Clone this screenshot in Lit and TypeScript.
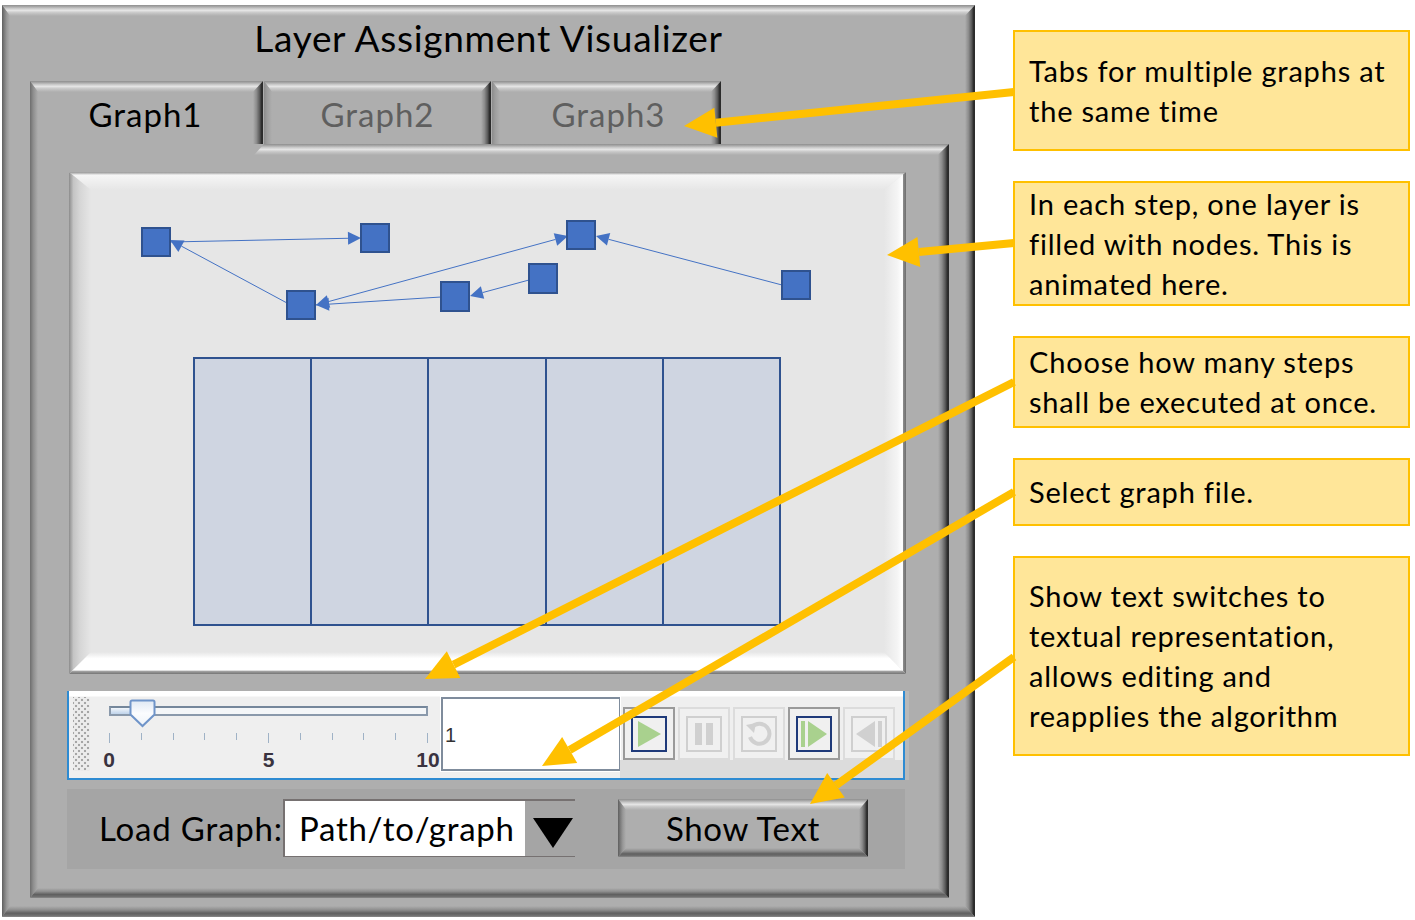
import { LitElement, html, svg, css } from 'lit';
import { customElement } from 'lit/decorators.js';

type Pt = [number, number];

// Coordinates of the drawing on the canvas, in page pixels
const NODES: [number, number, number, number][] = [
  [142, 228, 28, 28],
  [361, 224, 28, 28],
  [287, 291, 28, 28],
  [441, 282, 28, 29],
  [567, 221, 28, 28],
  [529, 264, 28, 29],
  [782, 271, 28, 28],
];

const EDGES: { from: Pt; to: Pt; both?: boolean }[] = [
  { from: [170, 242], to: [361, 238] },
  { from: [287, 303], to: [170, 240] },
  { from: [316, 305], to: [568, 236], both: true },
  { from: [441, 297], to: [316, 305] },
  { from: [529, 280], to: [470, 296] },
  { from: [782, 285], to: [596, 236] },
];

const ANNOTATIONS: { h: number; lines: string[] }[] = [
  { h: 121, lines: ['Tabs for multiple graphs at', 'the same time'] },
  { h: 125, lines: ['In each step, one layer is', 'filled with nodes. This is', 'animated here.'] },
  { h: 92, lines: ['Choose how many steps', 'shall be executed at once.'] },
  { h: 68, lines: ['Select graph file.'] },
  { h: 200, lines: ['Show text switches to', 'textual representation,', 'allows editing and', 'reapplies the algorithm'] },
];

const CALLOUTS: { from: Pt; tip: Pt }[] = [
  { from: [1014, 92], tip: [684, 126] },
  { from: [1014, 243], tip: [887, 255] },
  { from: [1014, 382], tip: [425, 679] },
  { from: [1014, 492], tip: [542, 766] },
  { from: [1014, 657], tip: [810, 804] },
];

// Triangle with its point at tip, pointing away from "from"
function head(from: Pt, tip: Pt, len: number, half: number) {
  const dx = tip[0] - from[0];
  const dy = tip[1] - from[1];
  const d = Math.hypot(dx, dy);
  const ux = dx / d;
  const uy = dy / d;
  const bx = tip[0] - ux * len;
  const by = tip[1] - uy * len;
  const pts = `${tip[0]},${tip[1]} ${bx - uy * half},${by + ux * half} ${bx + uy * half},${by - ux * half}`;
  return { pts, base: [bx, by] as Pt };
}

const edges = () => html`<i class="e t"></i><i class="e l"></i><i class="e r"></i><i class="e b"></i>`;

const TICKS = [0, 1, 2, 3, 4, 5, 6, 7, 8, 9, 10];

@customElement('app-root')
export class AppRoot extends LitElement {
  static styles = css`
    :host {
      display: flex;
      width: 1415px;
      height: 920px;
      position: relative;
      overflow: hidden;
      background: #fff;
      font-family: Lato, 'Open Sans', sans-serif;
      font-variant-ligatures: none;
      color: #000;
    }

    /* bevelled box: four mitred edges laid over the box */
    .bevel {
      position: relative;
      background: #aeaeae;
      box-sizing: border-box;
      --t: 11px;
      --l: 8px;
      --r: 10px;
      --b: 11px;
    }
    .e {
      position: absolute;
      display: block;
    }
    .e.t {
      left: 0;
      right: 0;
      top: 0;
      height: var(--t);
      clip-path: polygon(0 0, 100% 0, calc(100% - var(--r)) 100%, var(--l) 100%);
      background: linear-gradient(180deg, #8e8e8e 0, #a8a8a8 15%, #d0d0d0 35%, #e4e4e4 50%, #c8c8c8 70%, #aeaeae 100%);
    }
    .e.l {
      left: 0;
      top: 0;
      bottom: 0;
      width: var(--l);
      clip-path: polygon(0 0, 100% var(--t), 100% calc(100% - var(--b)), 0 100%);
      background: linear-gradient(90deg, #5e5e5e 0, #787878 25%, #989898 60%, #aeaeae 100%);
    }
    .e.r {
      right: 0;
      top: 0;
      bottom: 0;
      width: var(--r);
      clip-path: polygon(100% 0, 100% 100%, 0 calc(100% - var(--b)), 0 var(--t));
      background: linear-gradient(90deg, #aeaeae 0, #8c8c8c 35%, #5c5c5c 65%, #2e2e2e 85%, #2a2a2a 100%);
    }
    .e.b {
      left: 0;
      right: 0;
      bottom: 0;
      height: var(--b);
      clip-path: polygon(var(--l) 0, calc(100% - var(--r)) 0, 100% 100%, 0 100%);
      background: linear-gradient(180deg, #aeaeae 0, #8e8e8e 35%, #606060 65%, #6e6e6e 85%, #8a8a8a 100%);
    }

    .window {
      margin: 5px 0 0 2px;
      width: 973px;
      height: 912px;
      padding-left: 28px;
      flex: none;
    }
    .title {
      height: 76px;
      width: 917px;
      margin-left: -28px;
      padding-left: 28px;
      box-sizing: content-box;
      font-size: 37px;
      letter-spacing: 0.7px;
      line-height: 66px;
      text-align: center;
    }

    .tabs {
      display: flex;
      gap: 1px;
      height: 63px;
    }
    .tab {
      height: 63px;
      flex: none;
      text-align: center;
      font-size: 33px;
      letter-spacing: 1px;
      line-height: 66px;
      color: #5f5f5f;
      --b: 0px;
    }
    .tab:nth-child(1) {
      width: 233px;
      padding-right: 2px;
    }
    .tab:nth-child(2) {
      width: 227px;
    }
    .tab:nth-child(3) {
      width: 229px;
      padding-left: 4px;
    }
    .tab .e.b {
      display: none;
    }
    .tab.active {
      color: #000;
    }
    .tab .e.l {
      background: linear-gradient(90deg, #8c8c8c 0, #9e9e9e 40%, #aeaeae 100%);
    }
    .tab.active .e.l {
      background: linear-gradient(90deg, #6e6e6e 0, #8e8e8e 40%, #aeaeae 100%);
    }

    .panel {
      width: 919px;
      height: 754px;
      padding: 28px 0 0 37px;
      --t: 11px;
      --r: 11px;
      --b: 10px;
    }
    .panel > .e.t {
      left: 224px;
      clip-path: polygon(10px 0, 100% 0, calc(100% - var(--r)) 100%, 0 100%);
    }
    .panel > .e.l {
      clip-path: polygon(0 0, 100% 0, 100% calc(100% - var(--b)), 0 100%);
      background: linear-gradient(90deg, #6e6e6e 0, #8e8e8e 40%, #aeaeae 100%);
    }

    .canvas {
      position: relative;
      margin-left: 2px;
      width: 837px;
      height: 502px;
      background: #e6e6e6;
      --t: 18px;
      --l: 22px;
      --r: 22px;
      --b: 22px;
    }
    .canvas .e.t {
      background: linear-gradient(180deg, #969696 0, #c4c4c4 9%, #f6f6f6 17%, #e6e6e6 100%);
    }
    .canvas .e.l {
      background: linear-gradient(90deg, #8c8c8c 0, #a8a8a8 10%, #c4c4c4 20%, #d6d6d6 50%, #e6e6e6 100%);
    }
    .canvas .e.r {
      background: linear-gradient(90deg, #e6e6e6 0, #f4f4f4 60%, #fff 84%, #8a8a8a 88%, #6e6e6e 100%);
    }
    .canvas .e.b {
      background: linear-gradient(180deg, #e6e6e6 0, #fff 30%, #fff 82%, #a0a0a0 88%, #747474 100%);
    }
    .graph {
      display: block;
      position: relative;
      width: 836px;
      height: 185px;
    }
    .layers {
      position: relative;
      display: flex;
      margin-left: 124px;
      width: 588px;
      height: 269px;
      box-sizing: border-box;
      border: 2px solid #2f528f;
      background: #cfd5e1;
    }
    .layers div {
      flex: 1;
      border-left: 2px solid #2f528f;
    }
    .layers div:first-child {
      border-left: none;
    }

    .toolbar {
      margin-top: 17px;
      width: 838px;
      height: 89px;
      box-sizing: border-box;
      display: flex;
      border-left: 2px solid #2e8bd2;
      border-right: 2px solid #2e8bd2;
      border-bottom: 2px solid #2e8bd2;
      background: linear-gradient(180deg, #fff 0, #fff 5px, #efefef 6px);
      box-shadow: 4px 0 0 #b9b9b9;
      position: relative;
    }
    .grip {
      width: 17px;
      height: 74px;
      margin: 6px 0 0 4px;
      flex: none;
      background-color: #ececec;
      background-image: radial-gradient(circle, #a6a6a6 1.1px, transparent 1.6px),
        radial-gradient(circle, #a6a6a6 1.1px, transparent 1.6px);
      background-size: 6px 6px;
      background-position: 0 0, 3px 3px;
    }
    .slider {
      width: 351px;
      flex: none;
      padding: 9px 0 0 19px;
      box-sizing: border-box;
      height: 80px;
      position: relative;
    }
    .track {
      position: relative;
      width: 319px;
      height: 10px;
      margin-top: 6px;
      box-sizing: border-box;
      border: 2px solid #8a99ab;
      border-top-color: #75879b;
      background: #f4f6f8;
    }
    .track span {
      display: block;
      width: 22px;
      height: 6px;
      background: linear-gradient(180deg, #f2f6fb, #bfd3ea);
    }
    .thumb {
      position: absolute;
      left: 18px;
      top: -9px;
      display: block;
    }
    .ticks {
      display: flex;
      justify-content: space-between;
      align-items: flex-start;
      width: 319px;
      height: 10px;
      margin-top: 17px;
    }
    .ticks i {
      display: block;
      width: 1px;
      height: 7px;
      background: #9fb2c6;
    }
    .ticks i.major {
      height: 10px;
    }
    .labels {
      display: flex;
      justify-content: space-between;
      width: 319px;
      margin-top: 5px;
      font: bold 21px/24px 'Liberation Sans', sans-serif;
      color: #3a3340;
    }
    .labels span {
      width: 0;
      display: flex;
      justify-content: center;
    }
    .input {
      width: 179px;
      height: 74px;
      margin-top: 6px;
      box-sizing: border-box;
      flex: none;
      border: 2px solid #7f8c9c;
      border-right-width: 1px;
      box-shadow: 0 0 0 1px #fff;
      background: #fff;
      padding: 24px 0 0 2px;
      font: 20px/24px 'Liberation Sans', sans-serif;
      color: #333;
    }
    .buttons {
      display: flex;
      align-items: flex-start;
      flex: 1;
      gap: 3px;
      padding: 16px 0 0 3px;
      background: linear-gradient(180deg, transparent 69px, #dcdcdc 69px);
    }
    .btn {
      width: 52px;
      height: 53px;
      box-sizing: border-box;
      border: 2px solid #dcdcdc;
      background: #f0f0f0;
      display: flex;
      align-items: center;
      justify-content: center;
    }
    .btn.on {
      border-color: #9a9a9a;
    }

    .load {
      margin-top: 9px;
      width: 838px;
      height: 80px;
      display: flex;
      background: #a5a5a5;
      padding: 10px 0 0 32px;
      box-sizing: border-box;
    }
    .load label {
      width: 184px;
      flex: none;
      font-size: 33px;
      letter-spacing: 0.8px;
      line-height: 58px;
      white-space: nowrap;
    }
    .combo {
      display: flex;
      width: 292px;
      height: 58px;
      flex: none;
      box-sizing: border-box;
      border-top: 2px solid #767171;
      border-bottom: 1px solid #767171;
    }
    .combo .field {
      width: 242px;
      flex: none;
      box-sizing: border-box;
      border-left: 2px solid #767171;
      background: #fff;
      padding-left: 14px;
      font-size: 33px;
      letter-spacing: 0.7px;
      line-height: 54px;
      white-space: nowrap;
    }
    .combo .drop {
      flex: 1;
      display: flex;
      align-items: center;
      justify-content: center;
      padding: 9px 0 0 5px;
    }
    .show {
      margin-left: 43px;
      width: 250px;
      height: 58px;
      flex: none;
      text-align: center;
      font-size: 33px;
      letter-spacing: 0.67px;
      line-height: 58px;
      --t: 11px;
      --l: 8px;
      --r: 9px;
      --b: 9px;
    }

    .notes {
      margin: 30px 0 0 38px;
      display: flex;
      flex-direction: column;
      gap: 30px;
      flex: none;
    }
    .note {
      width: 397px;
      box-sizing: border-box;
      border: 2px solid #ffc000;
      background: #ffe699;
      padding-left: 14px;
      display: flex;
      flex-direction: column;
      justify-content: center;
      font-size: 29px;
      letter-spacing: 0.8px;
      line-height: 40px;
      white-space: nowrap;
    }

    .arrows {
      position: absolute;
      left: 0;
      top: 0;
      width: 1415px;
      height: 920px;
      pointer-events: none;
    }
  `;

  renderGraph() {
    return html`<svg class="graph" viewBox="69 172 836 185">
      ${EDGES.map((e) => {
        const a = head(e.from, e.to, 13, 6.5);
        const b = e.both ? head(e.to, e.from, 13, 6.5) : null;
        return svg`
          <line x1=${e.from[0]} y1=${e.from[1]} x2=${a.base[0]} y2=${a.base[1]} stroke="#4472c4" stroke-width="1" />
          <polygon points=${a.pts} fill="#4472c4" />
          ${b ? svg`<polygon points=${b.pts} fill="#4472c4" />` : ''}
        `;
      })}
      ${NODES.map(
        (n) => svg`<rect x=${n[0]} y=${n[1]} width=${n[2]} height=${n[3]} fill="#4472c4" stroke="#2f528f" stroke-width="2" />`
      )}
    </svg>`;
  }

  renderButton(on: boolean, glyph: unknown) {
    const line = on ? '#1f3a7a' : '#cfcfcf';
    return html`<div class="btn ${on ? 'on' : ''}">
      <svg width="36" height="36" viewBox="0 0 36 36">
        <rect x="1" y="1" width="34" height="34" fill="none" stroke=${line} stroke-width="2" />
        ${glyph}
      </svg>
    </div>`;
  }

  renderSlider() {
    return html`<div class="slider">
      <div class="track">
        <span></span>
        <svg class="thumb" width="27" height="29" viewBox="0 0 27 29">
          <defs>
            <linearGradient id="th" x1="0" y1="0" x2="0" y2="1">
              <stop offset="0" stop-color="#dfe8f4" />
              <stop offset="0.5" stop-color="#fbfcfe" />
              <stop offset="1" stop-color="#eef3f9" />
            </linearGradient>
          </defs>
          <path d="M3 1.5H24a1.5 1.5 0 0 1 1.5 1.5V15.5L13.5 27 1.5 15.5V3A1.5 1.5 0 0 1 3 1.5Z" fill="url(#th)" stroke="#6f94c9" stroke-width="2" />
        </svg>
      </div>
      <div class="ticks">${TICKS.map((t) => html`<i class=${t % 5 === 0 ? 'major' : ''}></i>`)}</div>
      <div class="labels"><span>0</span><span>5</span><span>10</span></div>
    </div>`;
  }

  render() {
    return html`
      <div class="window bevel">
        ${edges()}
        <div class="title">Layer Assignment Visualizer</div>
        <div class="tabs">
          <div class="tab bevel active">${edges()}Graph1</div>
          <div class="tab bevel">${edges()}Graph2</div>
          <div class="tab bevel">${edges()}Graph3</div>
        </div>
        <div class="panel bevel">
          ${edges()}
          <div class="canvas">
            ${edges()}
            ${this.renderGraph()}
            <div class="layers"><div></div><div></div><div></div><div></div><div></div></div>
          </div>
          <div class="toolbar">
            <div class="grip"></div>
            ${this.renderSlider()}
            <div class="input">1</div>
            <div class="buttons">
              ${this.renderButton(true, svg`<polygon points="7,5 7,31 30,18" fill="#a9d18e" />`)}
              ${this.renderButton(false, svg`<rect x="9" y="7" width="7" height="22" fill="#d0d0d0" /><rect x="20" y="7" width="7" height="22" fill="#d0d0d0" />`)}
              ${this.renderButton(false, svg`<path d="M11 11a10 10 0 1 1-2 10" fill="none" stroke="#d0d0d0" stroke-width="4" /><polygon points="5,9 15,7 13,17" fill="#d0d0d0" />`)}
              ${this.renderButton(true, svg`<rect x="5" y="5" width="4" height="26" fill="#a9d18e" /><polygon points="12,5 12,31 31,18" fill="#a9d18e" />`)}
              ${this.renderButton(false, svg`<rect x="27" y="5" width="4" height="26" fill="#d0d0d0" /><polygon points="24,5 24,31 5,18" fill="#d0d0d0" />`)}
            </div>
          </div>
          <div class="load">
            <label>Load Graph:</label>
            <div class="combo">
              <div class="field">Path/to/graph</div>
              <div class="drop">
                <svg width="40" height="30" viewBox="0 0 40 30"><polygon points="0,0 40,0 20,30" fill="#000" /></svg>
              </div>
            </div>
            <div class="show bevel">${edges()}Show Text</div>
          </div>
        </div>
      </div>
      <div class="notes">
        ${ANNOTATIONS.map(
          (a) => html`<div class="note" style="height:${a.h}px">${a.lines.map((l) => html`<div>${l}</div>`)}</div>`
        )}
      </div>
      <svg class="arrows" viewBox="0 0 1415 920">
        ${CALLOUTS.map((c) => {
          const h = head(c.from, c.tip, 32, 15);
          return svg`
            <line x1=${c.from[0]} y1=${c.from[1]} x2=${h.base[0]} y2=${h.base[1]} stroke="#ffc000" stroke-width="8" />
            <polygon points=${h.pts} fill="#ffc000" />
          `;
        })}
      </svg>
    `;
  }
}
